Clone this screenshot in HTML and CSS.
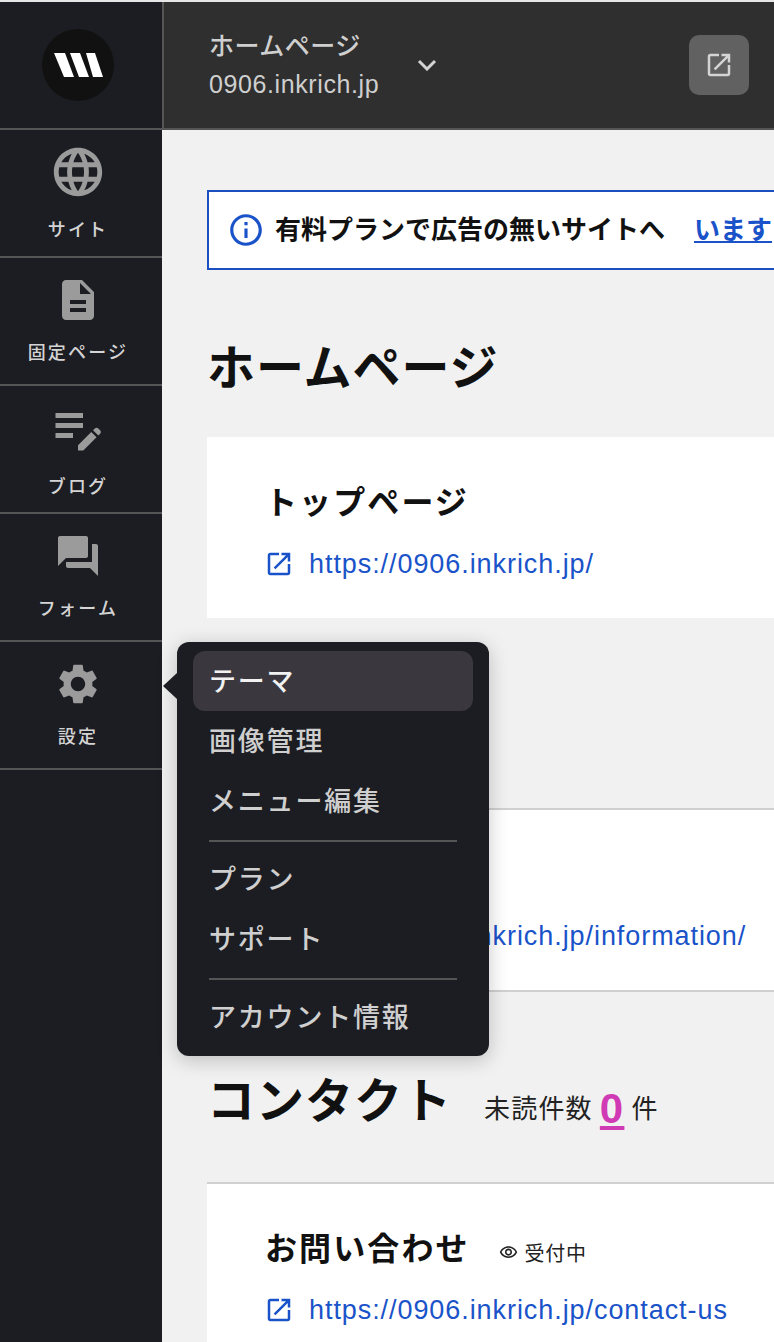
FILE: index.html
```html
<!DOCTYPE html>
<html lang="ja">
<head>
<meta charset="utf-8">
<title>ホームページ</title>
<link rel="stylesheet" href="styles.css">
</head>
<body>
<div class="app">
  <aside class="sidebar">
    <a class="logo-cell"><svg class="logo" viewBox="0 0 72 72"><circle cx="36" cy="36" r="36" fill="#111"/><path fill="#fff" d="M12 24h11l9 24H22zM28 24h10l9 24H37zM44 24h9l8 24H51z"/></svg></a>
    <nav>
      <a class="nav-item"><svg class="nav-icon globe" viewBox="0 0 24 24"><path d="M11.99 2C6.47 2 2 6.48 2 12s4.47 10 9.99 10C17.52 22 22 17.52 22 12S17.52 2 11.99 2zm6.93 6h-2.95c-.32-1.25-.78-2.45-1.38-3.56 1.84.63 3.37 1.91 4.33 3.56zM12 4.04c.83 1.2 1.48 2.53 1.91 3.96h-3.82c.43-1.43 1.08-2.76 1.91-3.96zM4.26 14C4.1 13.36 4 12.69 4 12s.1-1.36.26-2h3.38c-.08.66-.14 1.32-.14 2 0 .68.06 1.34.14 2H4.26zm.82 2h2.95c.32 1.25.78 2.45 1.38 3.56-1.84-.63-3.37-1.9-4.33-3.56zm2.95-8H5.08c.96-1.66 2.49-2.93 4.33-3.56C8.81 5.55 8.35 6.75 8.03 8zM12 19.96c-.83-1.2-1.48-2.53-1.91-3.96h3.82c-.43 1.43-1.08 2.76-1.91 3.96zM14.34 14H9.66c-.09-.66-.16-1.32-.16-2 0-.68.07-1.35.16-2h4.68c.09.65.16 1.32.16 2 0 .68-.07 1.34-.16 2zm.25 5.56c.6-1.11 1.06-2.31 1.38-3.56h2.95c-.96 1.65-2.49 2.93-4.33 3.56zM16.36 14c.08-.66.14-1.32.14-2 0-.68-.06-1.34-.14-2h3.38c.16.64.26 1.31.26 2s-.1 1.36-.26 2h-3.38z"/></svg><span>サイト</span></a>
      <a class="nav-item"><svg class="nav-icon" viewBox="0 0 24 24"><path d="M14 2H6c-1.1 0-1.99.9-1.99 2L4 20c0 1.1.89 2 1.99 2H18c1.1 0 2-.9 2-2V8l-6-6zm2 16H8v-2h8v2zm0-4H8v-2h8v2zm-3-5V3.5L18.5 9H13z"/></svg><span>固定ページ</span></a>
      <a class="nav-item"><svg class="nav-icon note" viewBox="0 0 24 24"><path d="M3 10h11v2H3v-2zm0-2h11V6H3v2zm0 8h7v-2H3v2zm15.01-3.13.71-.71c.39-.39 1.02-.39 1.41 0l.71.71c.39.39.39 1.02 0 1.41l-.71.71-2.12-2.12zm-.71.71-5.3 5.3V21h2.12l5.3-5.3-2.12-2.12z"/></svg><span>ブログ</span></a>
      <a class="nav-item"><svg class="nav-icon" viewBox="0 0 24 24"><path d="M21 6h-2v9H6v2c0 .55.45 1 1 1h11l4 4V7c0-.55-.45-1-1-1zm-4 6V3c0-.55-.45-1-1-1H3c-.55 0-1 .45-1 1v14l4-4h10c.55 0 1-.45 1-1z"/></svg><span>フォーム</span></a>
      <a class="nav-item"><svg class="nav-icon" viewBox="0 0 24 24"><path d="M19.14 12.94c.04-.3.06-.61.06-.94 0-.32-.02-.64-.07-.94l2.03-1.58c.18-.14.23-.41.12-.61l-1.92-3.32c-.12-.22-.37-.29-.59-.22l-2.39.96c-.5-.38-1.03-.7-1.62-.94l-.36-2.54c-.04-.24-.24-.41-.48-.41h-3.84c-.24 0-.43.17-.47.41l-.36 2.54c-.59.24-1.13.57-1.62.94l-2.39-.96c-.22-.08-.47 0-.59.22L2.74 8.87c-.12.21-.08.47.12.61l2.03 1.58c-.05.3-.09.63-.09.94s.02.64.07.94l-2.03 1.58c-.18.14-.23.41-.12.61l1.92 3.32c.12.22.37.29.59.22l2.39-.96c.5.38 1.03.7 1.62.94l.36 2.54c.05.24.24.41.48.41h3.84c.24 0 .44-.17.47-.41l.36-2.54c.59-.24 1.13-.56 1.62-.94l2.39.96c.22.08.47 0 .59-.22l1.92-3.32c.12-.22.07-.47-.12-.61l-2.01-1.58zM12 15.6c-1.98 0-3.6-1.62-3.6-3.6s1.62-3.6 3.6-3.6 3.6 1.62 3.6 3.6-1.62 3.6-3.6 3.6z"/></svg><span>設定</span></a>
    </nav>
  </aside>

  <main class="main">
    <header class="topbar">
      <div class="site-name"><div class="site-title">ホームページ</div><div class="site-domain">0906.inkrich.jp</div></div>
      <svg class="chevron" viewBox="0 0 20 12"><path d="M2 2l8 8 8-8"/></svg>
      <a class="open-btn"><svg class="ext ext-light" viewBox="0 0 24 24"><path d="M19 19H5V5h7V3H5c-1.11 0-2 .9-2 2v14c0 1.1.89 2 2 2h14c1.1 0 2-.9 2-2v-7h-2v7zM14 3v2h3.59l-9.83 9.83 1.41 1.41L19 6.41V10h2V3h-7z"/></svg></a>
    </header>

    <div class="content">
      <div class="notice">
        <svg class="info" viewBox="0 0 24 24"><path d="M11 7h2v2h-2zm0 4h2v6h-2zm1-9C6.48 2 2 6.48 2 12s4.48 10 10 10 10-4.48 10-10S17.52 2 12 2zm0 18c-4.41 0-8-3.59-8-8s3.59-8 8-8 8 3.59 8 8-3.59 8-8 8z"/></svg>
        <strong>有料プランで広告の無いサイトへ</strong>
        <a class="notice-link">います</a>
      </div>

      <h1 class="section-title section-title-first">ホームページ</h1>
      <section class="card card-first">
        <h2 class="card-title">トップページ</h2>
        <a class="card-url"><svg class="ext" viewBox="0 0 24 24"><path d="M19 19H5V5h7V3H5c-1.11 0-2 .9-2 2v14c0 1.1.89 2 2 2h14c1.1 0 2-.9 2-2v-7h-2v7zM14 3v2h3.59l-9.83 9.83 1.41 1.41L19 6.41V10h2V3h-7z"/></svg>https://0906.inkrich.jp/</a>
      </section>

      <div class="section-gap"></div>
      <section class="card card-ruled">
        <div class="card-title-space"></div>
        <a class="card-url"><svg class="ext" viewBox="0 0 24 24"><path d="M19 19H5V5h7V3H5c-1.11 0-2 .9-2 2v14c0 1.1.89 2 2 2h14c1.1 0 2-.9 2-2v-7h-2v7zM14 3v2h3.59l-9.83 9.83 1.41 1.41L19 6.41V10h2V3h-7z"/></svg>https://0906.inkrich.jp/information/</a>
      </section>

      <div class="section-row">
        <h1 class="section-title">コンタクト</h1>
        <p class="unread">未読件数<a class="unread-count">0</a>件</p>
      </div>
      <section class="card card-ruled">
        <div class="card-head">
          <h2 class="card-title">お問い合わせ</h2>
          <span class="status"><svg class="eye" viewBox="0 0 24 24"><path d="M12 6c3.79 0 7.17 2.13 8.82 5.5C19.17 14.87 15.79 17 12 17s-7.17-2.13-8.82-5.5C4.83 8.13 8.21 6 12 6m0-2C7 4 2.73 7.11 1 11.5 2.73 15.89 7 19 12 19s9.27-3.11 11-7.5C21.27 7.11 17 4 12 4zm0 5c1.38 0 2.5 1.12 2.5 2.5S13.38 14 12 14s-2.5-1.12-2.5-2.5S10.62 9 12 9m0-2c-2.48 0-4.5 2.02-4.5 4.5S9.52 16 12 16s4.5-2.02 4.5-4.5S14.48 7 12 7z"/></svg>受付中</span>
        </div>
        <a class="card-url"><svg class="ext" viewBox="0 0 24 24"><path d="M19 19H5V5h7V3H5c-1.11 0-2 .9-2 2v14c0 1.1.89 2 2 2h14c1.1 0 2-.9 2-2v-7h-2v7zM14 3v2h3.59l-9.83 9.83 1.41 1.41L19 6.41V10h2V3h-7z"/></svg>https://0906.inkrich.jp/contact-us</a>
      </section>
    </div>
  </main>

  <div class="menu">
    <div class="menu-group">
      <a class="menu-item menu-item-active">テーマ</a>
      <a class="menu-item">画像管理</a>
      <a class="menu-item">メニュー編集</a>
    </div>
    <div class="menu-group">
      <a class="menu-item">プラン</a>
      <a class="menu-item">サポート</a>
    </div>
    <div class="menu-group">
      <a class="menu-item">アカウント情報</a>
    </div>
  </div>
</div>
</body>
</html>
```
FILE: styles.css
```css
* { box-sizing: border-box; }
html, body { margin: 0; height: 100%; }
body {
  overflow: hidden;
  background: #e6e6e6;
  padding-top: 2px;
  font-family: "Liberation Sans", "Noto Sans CJK JP", sans-serif;
  color: #111;
}
a { color: inherit; text-decoration: none; }
h1, h2, p { margin: 0; }

.app {
  position: relative;
  display: grid;
  grid-template-columns: 162px minmax(0, 1fr);
  height: 1340px;
  overflow: hidden;
}

/* sidebar */
.sidebar { background: #1c1d22; }
.logo-cell {
  display: flex;
  align-items: center;
  justify-content: center;
  height: 128px;
  padding-right: 6px;
  border-bottom: 2px solid #555;
}
.logo { width: 72px; height: 72px; }
.nav-item {
  display: flex;
  flex-direction: column;
  align-items: center;
  height: 128px;
  padding-right: 6px;
  border-bottom: 2px solid #555;
  color: #d4d4d4;
  font-size: 18px;
  font-weight: 500;
  letter-spacing: 2.2px;
  line-height: 26px;
}
.nav-icon { width: 48px; height: 48px; margin-top: 18px; fill: #9b9b9c; }
.nav-icon + span { margin-top: 16px; }
.nav-icon.globe { width: 58px; height: 58px; margin-top: 13px; }
.nav-icon.note { width: 60px; height: 60px; margin-top: 12px; }

/* top bar */
.main { min-width: 0; background: #f1f1f1; }
.topbar {
  display: flex;
  align-items: center;
  height: 128px;
  padding: 0 25px 0 45px;
  background: #2f2f2f;
  border-left: 2px solid #555;
  border-bottom: 2px solid #555;
  color: #cfcfcf;
}
.site-name { font-size: 25px; line-height: 38px; }
.site-title { letter-spacing: .5px; font-weight: 500; }
.site-domain { letter-spacing: .6px; }
.chevron {
  width: 20px;
  height: 12px;
  margin-left: 38px;
  fill: none;
  stroke: #d4d4d4;
  stroke-width: 3;
}
.open-btn {
  display: flex;
  align-items: center;
  justify-content: center;
  width: 60px;
  height: 60px;
  margin-left: auto;
  border-radius: 10px;
  background: #616161;
}
.ext { width: 30px; height: 30px; flex: none; fill: #1a53c9; }
.ext-light { fill: #d4d4d4; }

/* content */
.content { padding: 60px 0 0 45px; }
.notice {
  display: flex;
  align-items: center;
  height: 80px;
  padding-left: 18px;
  background: #fff;
  border: 2px solid #1a4fc0;
  border-right: 0;
  font-size: 26px;
  white-space: nowrap;
}
.notice strong { margin-left: 10px; margin-bottom: 5px; font-weight: 700; color: #111; }
.info { width: 38px; height: 38px; flex: none; fill: #1a53c9; }
.notice-link {
  margin-left: 29px;
  margin-bottom: 5px;
  color: #1a53c9;
  font-weight: 700;
  text-decoration: underline;
}

.section-title {
  font-size: 48px;
  line-height: 72px;
  font-weight: 700;
  letter-spacing: 1px;
}
.section-title-first { margin-top: 63px; margin-bottom: 32px; }
.section-gap { height: 190px; }

.section-row { display: flex; align-items: center; margin-top: 72px; margin-bottom: 46px; }
.section-row .section-title { margin-top: 2px; margin-bottom: -2px; }
.unread {
  display: flex;
  align-items: center;
  margin: 9px 0 -9px 32px;
  font-size: 26px;
  line-height: 72px;
  letter-spacing: 1.2px;
  color: #222;
}
.unread-count {
  margin: 0 7px;
  color: #d03ab4;
  font-size: 42px;
  line-height: 44px;
  font-weight: 700;
  text-decoration: underline;
  text-underline-offset: 3px;
}

.card { padding: 47px 0 36px 58px; background: #fff; }
.card-first { padding-top: 48px; }
.card-ruled { border-top: 2px solid #d0d0d0; border-bottom: 2px solid #d0d0d0; }
.card-title { font-size: 32px; line-height: 36px; font-weight: 700; letter-spacing: 2.1px; }
.card-title-space { height: 36px; }
.card-head { display: flex; align-items: center; }
.status {
  display: flex;
  align-items: center;
  margin: 6px 0 0 30px;
  font-size: 20px;
  letter-spacing: .7px;
  color: #222;
}
.eye { width: 19px; height: 19px; margin: 0 7px 0 -1px; fill: #222; }
.card-url {
  display: flex;
  align-items: center;
  margin-top: 25px;
  font-size: 27px;
  line-height: 36px;
  letter-spacing: .93px;
  color: #1a53c9;
  white-space: nowrap;
}
.card-url .ext { margin-right: 15px; margin-left: -1px; }

/* popup menu */
.menu {
  position: absolute;
  left: 177px;
  top: 640px;
  width: 312px;
  padding: 9px 16px 8px;
  background: #1c1d22;
  border-radius: 12px;
  box-shadow: 0 4px 20px rgba(0, 0, 0, .22);
}
.menu::before {
  content: "";
  position: absolute;
  left: -14px;
  top: 31px;
  border-style: solid;
  border-width: 13px 14px 13px 0;
  border-color: transparent #1c1d22 transparent transparent;
}
.menu-item {
  display: block;
  height: 60px;
  padding-left: 16px;
  border-radius: 12px;
  color: #cfcfcf;
  font-size: 27px;
  font-weight: 500;
  line-height: 60px;
  letter-spacing: 1.8px;
}
.menu-item-active { background: #3a383e; color: #f2f2f2; }
.menu-group { position: relative; padding: 10px 0 8px; }
.menu-group:first-child { padding: 0 0 9px; }
.menu-group:first-child .menu-item { padding-top: 1px; }
.menu-group:last-child { padding-bottom: 0; }
.menu-group + .menu-group::before {
  content: "";
  position: absolute;
  left: 16px;
  right: 16px;
  top: 0;
  height: 2px;
  background: #555;
}
```
